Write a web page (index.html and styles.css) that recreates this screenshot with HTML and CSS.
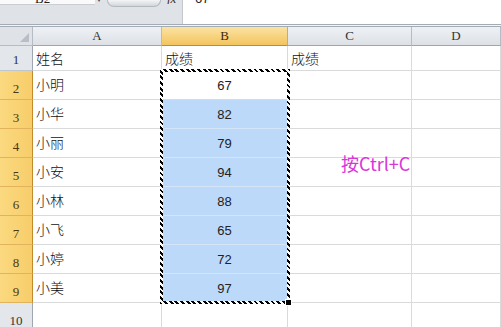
FILE: index.html
```html
<!DOCTYPE html>
<html>
<head>
  <title>成绩表</title>
  <link rel="stylesheet" href="styles.css">
</head>
<body>
  <div class="formula">
    <div class="namearea">
      <div class="namebox"><span>B2</span></div>
      <div class="arrow">▾</div>
      <div class="pill"></div>
      <div class="fx"><span>fx</span></div>
    </div>
    <div class="content"><span>67</span></div>
  </div>
  <div class="split"></div>

  <div class="sheet">
    <div class="corner"><div class="tri"></div></div>
    <div class="colhead">A</div>
    <div class="colhead active">B</div>
    <div class="colhead">C</div>
    <div class="colhead">D</div>

    <div class="rowhead first">1</div>
    <div class="cell name first">姓名</div>
    <div class="cell name first">成绩</div>
    <div class="cell name first">成绩</div>
    <div class="cell first"></div>

    <div class="rowhead active">2</div>
    <div class="cell name">小明</div>
    <div class="cell num">67</div>
    <div class="cell"></div>
    <div class="cell"></div>

    <div class="rowhead active">3</div>
    <div class="cell name">小华</div>
    <div class="cell num sel">82</div>
    <div class="cell"></div>
    <div class="cell"></div>

    <div class="rowhead active">4</div>
    <div class="cell name">小丽</div>
    <div class="cell num sel">79</div>
    <div class="cell"></div>
    <div class="cell"></div>

    <div class="rowhead active">5</div>
    <div class="cell name">小安</div>
    <div class="cell num sel">94</div>
    <div class="cell"></div>
    <div class="cell"></div>

    <div class="rowhead active">6</div>
    <div class="cell name">小林</div>
    <div class="cell num sel">88</div>
    <div class="cell"></div>
    <div class="cell"></div>

    <div class="rowhead active">7</div>
    <div class="cell name">小飞</div>
    <div class="cell num sel">65</div>
    <div class="cell"></div>
    <div class="cell"></div>

    <div class="rowhead active">8</div>
    <div class="cell name">小婷</div>
    <div class="cell num sel">72</div>
    <div class="cell"></div>
    <div class="cell"></div>

    <div class="rowhead active">9</div>
    <div class="cell name">小美</div>
    <div class="cell num sel">97</div>
    <div class="cell"></div>
    <div class="cell"></div>

    <div class="rowhead">10</div>
    <div class="cell"></div>
    <div class="cell"></div>
    <div class="cell"></div>
    <div class="cell"></div>

    <!-- copy marquee round B2:B9 -->
    <div class="marquee"><div class="handle"></div></div>
    <div class="note">按Ctrl+C</div>
  </div>
</body>
</html>
```

FILE: styles.css
```css
body {
  margin: 0;
  width: 501px;
  height: 327px;
  overflow: hidden;
  background: #fff;
  font-family: "Liberation Sans", "Noto Sans CJK SC", sans-serif;
}

/* formula bar, only its lower edge shows */
.formula {
  display: flex;
  height: 24px;
  border-bottom: 1px solid #a3abb5;
}
.namearea {
  width: 182px;
  display: flex;
  align-items: flex-start;
  background: #dfe2e7;
  border-right: 1px solid #c3c8ce;
}
.namebox {
  width: 95px;
  height: 4px;
  overflow: hidden;
  background: #fafafa;
  border-bottom: 1px solid #c9cdd2;
}
.namebox span {
  display: block;
  margin: -9px 0 0 35px;
  font-family: "Liberation Serif", serif;
  font-size: 13px;
  color: #222;
}
.arrow {
  height: 4px;
  overflow: hidden;
  font-size: 8px;
  line-height: 0;
  color: #444;
  margin-left: 2px;
}
.pill {
  width: 52px;
  height: 6px;
  margin-left: 6px;
  border-radius: 0 0 14px 14px;
  background: linear-gradient(#f4f5f7, #d2d6dc);
  border: 1px solid #b5bac1;
  border-top: none;
}
.fx {
  height: 4px;
  overflow: hidden;
  margin-left: 6px;
}
.fx span {
  display: block;
  margin-top: -9px;
  font-family: "Liberation Serif", serif;
  font-style: italic;
  font-size: 13px;
  color: #333;
}
.content {
  flex: 1;
  height: 4px;
  overflow: hidden;
}
.content span {
  display: block;
  margin: -9px 0 0 12px;
  font-size: 13px;
  color: #222;
}
.split {
  height: 1px;
  background: #f4f5f7;
  border-bottom: 1px solid #a3abb5;
}

/* grid */
.sheet {
  position: relative;
  display: grid;
  grid-template-columns: 33px 129px 126px 124px 1fr;
  grid-template-rows: 19px 25px repeat(9, 29px);
}
.corner {
  display: flex;
  align-items: flex-end;
  justify-content: flex-end;
  background: #dfe3e8;
  border-right: 1px solid #b6bcc4;
  border-bottom: 1px solid #b6bcc4;
  padding: 0 3px 3px 0;
}
.tri {
  width: 0;
  height: 0;
  border-left: 9px solid transparent;
  border-bottom: 9px solid #b9bec6;
}
.colhead {
  display: flex;
  align-items: center;
  justify-content: center;
  background: linear-gradient(#eef1f4, #dde1e7);
  border-right: 1px solid #b6bcc4;
  border-bottom: 1px solid #9ea7b1;
  font-family: "Liberation Serif", serif;
  font-size: 13px;
  color: #333;
}
.colhead.active {
  background: linear-gradient(#fbe3a2, #f3c45e);
  border-right-color: #d9a94a;
  border-bottom-color: #c28a2a;
  color: #3b2a08;
}
.rowhead {
  display: flex;
  align-items: flex-end;
  justify-content: center;
  padding-bottom: 2px;
  background: #e3e7ec;
  border-right: 1px solid #9ea7b1;
  border-bottom: 1px solid #c0c6cd;
  font-family: "Liberation Serif", serif;
  font-size: 13px;
  color: #333;
}
.rowhead.active {
  background: linear-gradient(90deg, #fbd980, #f7cd6a);
  border-right-color: #c28a2a;
  border-bottom-color: #e0b35c;
  color: #4a3810;
}
.cell {
  display: flex;
  align-items: center;
  border-right: 1px solid #d9dadc;
  border-bottom: 1px solid #d9dadc;
  color: #111;
}
.name {
  padding: 0 0 2px 3px;
  font-family: "Noto Sans CJK SC", sans-serif;
  font-size: 14px;
  font-weight: 300;
}
.name.first {
  padding-top: 2px;
}
.num {
  justify-content: center;
  font-size: 13px;
  color: #222;
}
.sel {
  background: #bcd9f9;
  border-bottom-color: #d4e5f8;
}

.marquee {
  position: absolute;
  left: 160px;
  top: 42px;
  width: 124px;
  height: 229px;
  border: 3px solid #000;
  border-image: repeating-linear-gradient(45deg, #000 0 2px, #fff 2px 4px) 3;
}
.handle {
  position: absolute;
  right: -5px;
  bottom: -5px;
  width: 5px;
  height: 5px;
  background: #000;
  border: 1px solid #fff;
}
.note {
  position: absolute;
  left: 341px;
  top: 126px;
  font-family: "Noto Sans CJK SC", sans-serif;
  font-size: 18px;
  color: #d936d9;
  line-height: 20px;
}
```
